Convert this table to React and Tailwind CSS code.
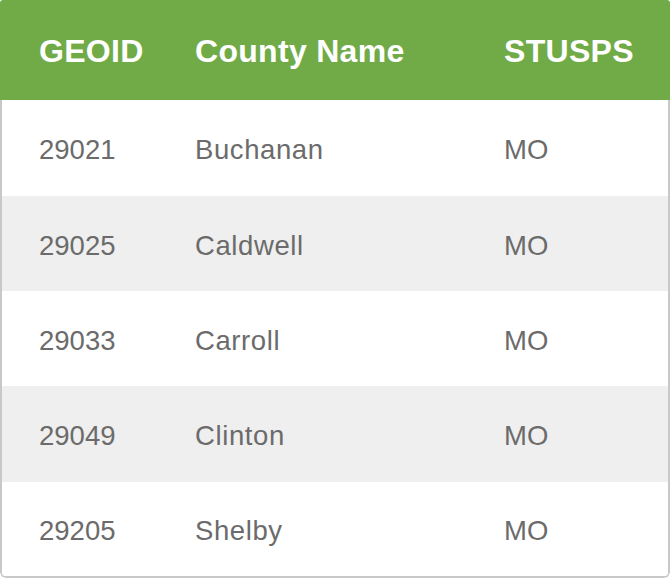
export default function App() {
  const rows = [
    ["29021", "Buchanan", "MO", "bg-white", "h-[96px]"],
    ["29025", "Caldwell", "MO", "bg-[#efefef]", "h-[95px]"],
    ["29033", "Carroll", "MO", "bg-[#ffffff]", "h-[95px]"],
    ["29049", "Clinton", "MO", "bg-[#efefef]", "h-[96px]"],
    ["29205", "Shelby", "MO", "bg-white", "h-[94px]"],
  ];
  return (
    <div className="w-[670px] h-[578px] bg-white" style={{ fontFamily: '"Liberation Sans", Arial, sans-serif' }}>
      <div className="w-full h-full rounded-t-[3px] rounded-b-[6px] overflow-hidden flex flex-col">
        <div className="h-[100px] bg-[#71ab48] flex items-center text-white font-bold text-[32px] tracking-[0.3px] pt-[2px]">
          <div className="w-[195px] pl-[39px]">GEOID</div>
          <div className="w-[309px]">County Name</div>
          <div>STUSPS</div>
        </div>
        <div className="flex-1 flex flex-col border-x-2 border-b-2 border-[#c8c8c8] rounded-b-[6px] overflow-hidden">
          {rows.map(([a, b, c, bg, h]) => (
            <div key={a} className={`${bg} ${h} flex items-center text-[#6b6b6b] text-[27.5px] pt-[4px]`}>
              <div className="w-[193px] pl-[37px]">{a}</div>
              <div className="w-[309px] tracking-[0.6px]">{b}</div>
              <div>{c}</div>
            </div>
          ))}
        </div>
      </div>
    </div>
  );
}
